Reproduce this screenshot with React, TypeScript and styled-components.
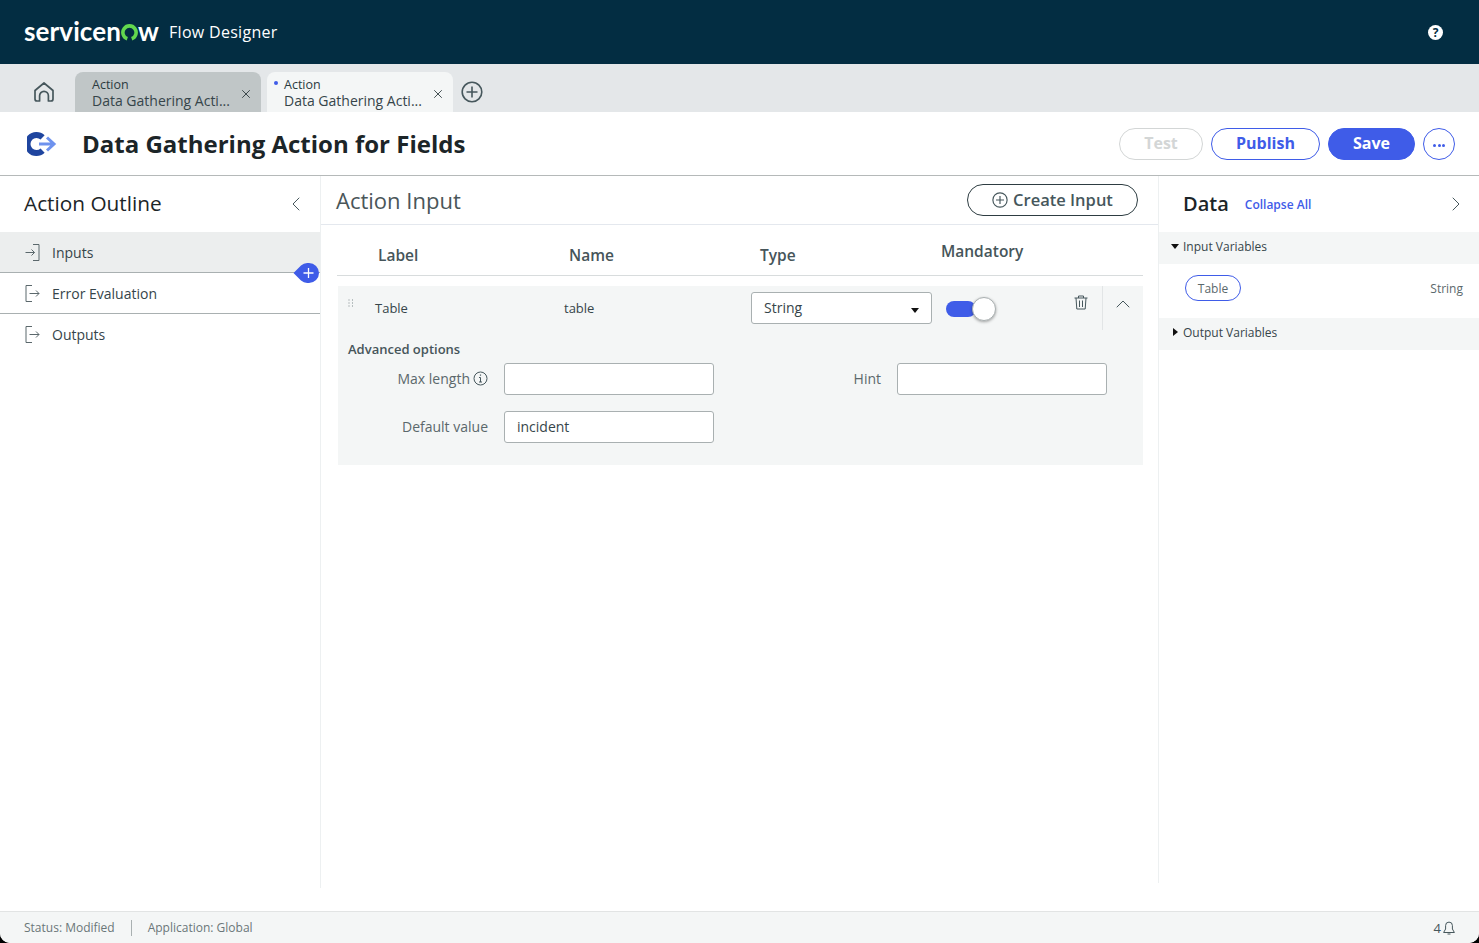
import styled, { createGlobalStyle } from 'styled-components';
import { ChevronLeft, ChevronRight, ChevronUp, X } from 'lucide-react';

const GlobalStyle = createGlobalStyle`
  html, body {
    margin: 0;
    height: 100%;
    background: #000;
  }
  #root {
    height: 100%;
  }
  * {
    box-sizing: border-box;
  }
`;

const Page = styled.div`
  height: 943px;
  display: flex;
  flex-direction: column;
  overflow: hidden;
  background: #fff;
  border-radius: 0 0 10px 10px;
  font-family: 'Open Sans', 'Liberation Sans', sans-serif;
  color: #2e3d42;
`;

const TopBar = styled.header`
  flex: 0 0 64px;
  display: flex;
  align-items: center;
  padding: 0 36px 0 24px;
  background: #032d42;
  color: #fff;
`;

const Logo = styled.div`
  display: flex;
  align-items: center;
  padding-bottom: 2px;
  font-family: 'Lato', sans-serif;
  font-weight: 700;
  font-size: 26px;
  line-height: 1;
  letter-spacing: 0.1px;
  width: 135px;
  white-space: nowrap;
`;

const ProductName = styled.span`
  margin-left: 10px;
  font-size: 16px;
  font-weight: 500;
  letter-spacing: 0.3px;
`;

const HelpBadge = styled.span`
  margin-left: auto;
  width: 15px;
  height: 15px;
  border-radius: 50%;
  background: #fff;
  color: #032d42;
  font-size: 12px;
  font-weight: 700;
  line-height: 15px;
  text-align: center;
`;

const TabStrip = styled.nav`
  flex: 0 0 48px;
  display: flex;
  align-items: flex-end;
  background: #e4e7e9;
`;

const HomeButton = styled.div`
  width: 75px;
  height: 40px;
  display: flex;
  align-items: center;
  justify-content: center;
  padding-left: 13px;
  color: #46575c;
`;

const Tab = styled.div<{ $active?: boolean }>`
  position: relative;
  width: 186px;
  height: 40px;
  margin-right: 6px;
  padding: 6px 0 0 17px;
  border-radius: 8px 8px 0 0;
  background: ${(p) => (p.$active ? '#f4f6f6' : '#c0c6c7')};
  font-size: 14px;
  line-height: 15px;
  color: #36454a;
`;

const TabKind = styled.div`
  font-size: 12.5px;
  line-height: 14px;
  color: #2b3a3f;
`;

const TabName = styled.div`
  margin-top: 1px;
`;

const TabDot = styled.span`
  position: absolute;
  left: 7px;
  top: 9px;
  width: 4px;
  height: 4px;
  border-radius: 50%;
  background: #3f5ce8;
`;

const TabClose = styled.span`
  position: absolute;
  right: 8px;
  top: 15px;
  display: flex;
  color: #1f2c30;
`;

const AddTab = styled.div`
  height: 40px;
  display: flex;
  align-items: center;
  padding: 0 0 0 2px;
  color: #46575c;
`;

const TitleBar = styled.div`
  flex: 0 0 64px;
  display: flex;
  align-items: center;
  padding: 1px 24px 0 27px;
  border-bottom: 1px solid #b5b9b9;
`;

const Title = styled.h1`
  margin: 0 0 2px 25px;
  font-size: 24px;
  font-weight: 700;
  color: #1c2528;
`;

const Actions = styled.div`
  margin-left: auto;
  display: flex;
  gap: 8px;
`;

const PillButton = styled.button<{ $kind: 'disabled' | 'outline' | 'solid'; $width: number }>`
  width: ${(p) => p.$width}px;
  height: 32px;
  padding: 0 0 2px;
  border-radius: 16px;
  font-family: inherit;
  font-size: 16px;
  font-weight: 700;
  border: 1px solid ${(p) => (p.$kind === 'disabled' ? '#d3d6d6' : '#3f5ce8')};
  background: ${(p) => (p.$kind === 'solid' ? '#3f5ce8' : '#fff')};
  color: ${(p) => (p.$kind === 'solid' ? '#fff' : p.$kind === 'outline' ? '#3f5ce8' : '#d3d6d6')};
`;

const MoreButton = styled.button`
  width: 32px;
  height: 32px;
  padding: 2px 0 0;
  display: flex;
  align-items: center;
  justify-content: center;
  gap: 1.5px;
  border: 1px solid #3f5ce8;
  border-radius: 50%;
  background: #fff;
`;

const MoreDot = styled.i`
  width: 3px;
  height: 3px;
  border-radius: 50%;
  background: #3f5ce8;
`;

const Body = styled.div`
  flex: 1;
  min-height: 0;
  display: flex;
`;

const LeftPanel = styled.aside`
  flex: 0 0 321px;
  height: 712px;
  border-right: 1px solid #edf0f1;
`;

const PanelHeader = styled.div`
  height: 56px;
  display: flex;
  align-items: center;
  justify-content: space-between;
  padding: 0 12px 2px 24px;
`;

const PanelTitle = styled.h2`
  margin: 0;
  font-size: 20.8px;
  font-weight: 500;
  color: #1c2528;
`;

const HeaderChevron = styled.span`
  display: flex;
  margin-top: 2px;
  color: #46575c;
`;

const OutlineRow = styled.div<{ $selected?: boolean }>`
  position: relative;
  height: 41px;
  display: flex;
  align-items: center;
  gap: 12px;
  padding: 1px 0 0 25px;
  font-size: 14px;
  color: #36454a;
  background: ${(p) => (p.$selected ? '#eceeee' : '#fff')};
  border-bottom: 1px solid #a9b0b1;

  &:last-child {
    padding-top: 0;
    border-bottom: none;
  }
`;

const AddStep = styled.div`
  position: absolute;
  right: 1px;
  bottom: -11px;
  display: flex;
  z-index: 1;
`;

const Center = styled.main`
  flex: 1;
  min-width: 0;
  height: 712px;
`;

const CenterHeader = styled.div`
  height: 49px;
  display: flex;
  align-items: center;
  justify-content: space-between;
  padding: 0 20px 1px 15px;
  border-bottom: 1px solid #e4e8ee;
`;

const CenterTitle = styled.h2`
  margin: 0;
  font-size: 22px;
  font-weight: 400;
  color: #4a5659;
`;

const CreateButton = styled.button`
  width: 171px;
  height: 32px;
  display: flex;
  align-items: center;
  justify-content: center;
  gap: 5px;
  padding: 0;
  border: 1px solid #2e3d42;
  border-radius: 16px;
  background: #fff;
  font-family: inherit;
  font-size: 16.5px;
  font-weight: 600;
  color: #46575c;
`;

const TableHead = styled.div`
  height: 51px;
  margin: 0 15px 0 16px;
  display: grid;
  grid-template-columns: 191px 191px 181px 1fr;
  align-items: center;
  padding: 10px 0 0 41px;
  border-bottom: 1px solid #d8dcdd;
  font-size: 15.5px;
  font-weight: 600;
  color: #46555a;
`;

const HeadCell = styled.div<{ $raised?: boolean }>`
  margin-bottom: ${(p) => (p.$raised ? '8px' : '0')};
`;

const InputCard = styled.section`
  height: 179px;
  margin: 10px 15px 0 17px;
  background: #f4f6f6;
`;

const CardTop = styled.div`
  height: 44px;
  display: grid;
  grid-template-columns: 37px 189px 187px 195px 100px 56px 41px;
  align-items: center;
  font-size: 13px;
  color: #36454a;
`;

const DragHandle = styled.div`
  align-self: start;
  padding: 13px 0 0 10px;
  display: flex;
  color: #7b878a;
`;

const SelectBox = styled.div`
  width: 181px;
  height: 32px;
  display: flex;
  align-items: center;
  justify-content: space-between;
  padding: 0 12px 2px;
  background: #fff;
  border: 1px solid #a9b0b1;
  border-radius: 3px;
  font-size: 14px;
`;

const Caret = styled.span`
  width: 0;
  height: 0;
  margin-top: 6px;
  border-left: 4px solid transparent;
  border-right: 4px solid transparent;
  border-top: 5px solid #111;
`;

const Toggle = styled.div`
  position: relative;
  width: 30px;
  height: 16px;
  margin-top: 2px;
  border-radius: 8px;
  background: #3f5ce8;
`;

const ToggleKnob = styled.span`
  position: absolute;
  left: 26px;
  top: -4px;
  width: 24px;
  height: 24px;
  border-radius: 50%;
  background: #fff;
  border: 1px solid #a9b0b1;
  box-shadow: 0 1px 3px rgba(0, 0, 0, 0.35);
`;

const TrashCell = styled.div`
  justify-self: end;
  align-self: start;
  padding: 9px 14px 0 0;
  display: flex;
  color: #46575c;
`;

const CollapseCell = styled.div`
  height: 44px;
  display: flex;
  justify-content: center;
  padding-top: 6px;
  border-left: 1px solid #e2e5e6;
  color: #46575c;
`;

const AdvancedTitle = styled.div`
  margin: 10px 0 5px 10px;
  font-size: 13px;
  line-height: 18px;
  font-weight: 600;
  color: #46555a;
`;

const FieldGrid = styled.div`
  display: grid;
  grid-template-columns: 140px 210px 151px 210px;
  column-gap: 16px;
  row-gap: 16px;
  padding-left: 10px;
  align-items: center;
`;

const FieldLabel = styled.label`
  display: flex;
  align-items: center;
  justify-content: flex-end;
  gap: 3px;
  padding-bottom: 2px;
  font-size: 14px;
  color: #5b686c;
`;

const FieldBox = styled.div`
  height: 32px;
  padding: 0 12px 2px;
  display: flex;
  align-items: center;
  background: #fff;
  border: 1px solid #a9b0b1;
  border-radius: 3px;
  font-size: 14px;
  color: #36454a;
`;

const RightPanel = styled.aside`
  flex: 0 0 321px;
  height: 707px;
  border-left: 1px solid #edf0f1;
`;

const DataHeader = styled.div`
  height: 56px;
  display: flex;
  align-items: center;
  padding: 0 11px 2px 24px;
`;

const DataTitle = styled.h2`
  margin: 0;
  font-size: 20px;
  font-weight: 600;
  color: #1c2528;
`;

const CollapseLink = styled.a`
  margin: 2px auto 0 16px;
  font-size: 12px;
  font-weight: 600;
  color: #3f5ce8;
`;

const SectionBar = styled.div`
  height: 32px;
  display: flex;
  align-items: center;
  padding-bottom: 4px;
  background: #f4f6f6;
  font-size: 12px;
  color: #36454a;
`;

const SectionCaret = styled.span`
  width: 24px;
  display: flex;
  justify-content: flex-end;
  padding-right: 4px;
`;

const CaretDown = styled.i`
  width: 0;
  height: 0;
  border-left: 4.5px solid transparent;
  border-right: 4.5px solid transparent;
  border-top: 5px solid #111;
`;

const CaretRight = styled.i`
  width: 0;
  height: 0;
  margin-right: 1px;
  border-top: 4.5px solid transparent;
  border-bottom: 4.5px solid transparent;
  border-left: 5px solid #111;
`;

const VariableRow = styled.div`
  height: 54px;
  display: flex;
  align-items: center;
  justify-content: space-between;
  padding: 0 16px 6px 26px;
  font-size: 12px;
  color: #5b686c;
`;

const VariablePill = styled.span`
  width: 56px;
  height: 26px;
  display: flex;
  align-items: center;
  justify-content: center;
  border: 1px solid #3f5ce8;
  border-radius: 13px;
`;

const Footer = styled.footer`
  flex: 0 0 32px;
  display: flex;
  align-items: center;
  padding: 0 24px;
  background: #f4f6f6;
  border-top: 1px solid #e2e4e4;
  font-size: 12px;
  color: #6b7679;
`;

const FooterDivider = styled.span`
  width: 1px;
  height: 16px;
  margin: 0 16px;
  background: #a9b0b1;
`;

const Notifications = styled.div`
  margin-left: auto;
  display: flex;
  align-items: center;
  gap: 2px;
  font-size: 13px;
  color: #46575c;
`;

function GreenO() {
  return (
    <svg width="17" height="17" viewBox="0 0 17 17" fill="none" aria-hidden style={{ margin: '3px 0 0 0' }}>
      <path d="M6.3 14.72 A6.6 6.6 0 1 1 10.7 14.72" stroke="#62d84e" strokeWidth="3.6" />
    </svg>
  );
}

function HomeIcon() {
  return (
    <svg width="22" height="22" viewBox="0 0 22 22" fill="none" stroke="currentColor" strokeWidth="1.7" strokeLinejoin="round" aria-hidden>
      <path d="M2 9.5 11 2l9 7.5V18a2 2 0 0 1-2 2h-2.6v-5.2a4.4 4.4 0 0 0-8.8 0V20H4a2 2 0 0 1-2-2z" />
    </svg>
  );
}

function CirclePlus({ size, strokeWidth }: { size: number; strokeWidth: number }) {
  return (
    <svg width={size} height={size} viewBox="0 0 22 22" fill="none" stroke="currentColor" strokeWidth={strokeWidth} aria-hidden>
      <circle cx="11" cy="11" r="9.8" />
      <path d="M11 5.5v11M5.5 11h11" />
    </svg>
  );
}

function ActionMark() {
  return (
    <svg width="30" height="26" viewBox="0 0 30 26" fill="none" aria-hidden>
      <path d="M15.6 6.4 A9 9 0 1 0 15.6 19.6" stroke="#1f459f" strokeWidth="6" />
      <path d="M12 13h15M20 6.5 27 13l-7 6.5" stroke="#6e92ee" strokeWidth="3" />
    </svg>
  );
}

function AddDrop() {
  return (
    <svg width="26" height="20" viewBox="0 0 26 20" aria-hidden>
      <path d="M0.5 10 L8 2.5 A10 10 0 0 1 15 0 H16 A10 10 0 0 1 16 20 H15 A10 10 0 0 1 8 17.5 Z" fill="#3f5ce8" />
      <path d="M15.5 5v10M10.5 10h10" stroke="#fff" strokeWidth="1.3" />
    </svg>
  );
}

function InIcon() {
  return (
    <svg width="15" height="17" viewBox="0 0 15 17" fill="none" stroke="#5b686c" strokeWidth="1" aria-hidden>
      <path d="M8 .5h6v16H8M.5 8.5h9M6.5 5.5l3 3-3 3" />
    </svg>
  );
}

function OutIcon() {
  return (
    <svg width="15" height="17" viewBox="0 0 15 17" fill="none" stroke="#5b686c" strokeWidth="1" aria-hidden>
      <path d="M7 .5H1v16h6M4.5 8.5h9.5M11 5.5l3 3-3 3" />
    </svg>
  );
}

function DragDots() {
  return (
    <svg width="6" height="8" viewBox="0 0 6 8" fill="currentColor" aria-hidden>
      {[0.5, 3.5, 6.5].map((y) => (
        <g key={y}>
          <rect x="0.5" y={y} width="1" height="1" />
          <rect x="4" y={y} width="1" height="1" />
        </g>
      ))}
    </svg>
  );
}

function TrashIcon() {
  return (
    <svg width="14" height="15" viewBox="0 0 14 15" fill="none" stroke="currentColor" strokeWidth="1" aria-hidden>
      <path d="M.5 3h13M4.5 3V1h5v2M2 3l.8 11h8.4L12 3M5.5 5.5v6.5M8.5 5.5v6.5" />
    </svg>
  );
}

function InfoIcon() {
  return (
    <svg width="15" height="15" viewBox="0 0 15 15" fill="none" stroke="#46575c" strokeWidth="1" aria-hidden>
      <circle cx="7.5" cy="7.5" r="6.5" />
      <path d="M7.5 6.5v4.5M6 6.5h1.5M6 11h3" />
      <path d="M7.5 3.5v1.2" strokeWidth="1.2" />
    </svg>
  );
}

function BellIcon() {
  return (
    <svg width="12" height="14" viewBox="0 0 12 14" fill="none" stroke="#46575c" strokeWidth="1" aria-hidden>
      <path d="M.6 11.5 2.600 8V4.500a3.400 3.400 0 0 1 6.800 0V8l2 3.500zM4.500 13h3" />
    </svg>
  );
}

export default function App() {
  return (
    <>
      <GlobalStyle />
      <Page>
        <TopBar>
          <Logo>
            servicen
            <GreenO />
            w
          </Logo>
          <ProductName>Flow Designer</ProductName>
          <HelpBadge>?</HelpBadge>
        </TopBar>

        <TabStrip>
          <HomeButton>
            <HomeIcon />
          </HomeButton>
          <Tab>
            <TabKind>Action</TabKind>
            <TabName>Data Gathering Acti...</TabName>
            <TabClose>
              <X size={14} strokeWidth={1.4} />
            </TabClose>
          </Tab>
          <Tab $active>
            <TabDot />
            <TabKind>Action</TabKind>
            <TabName>Data Gathering Acti...</TabName>
            <TabClose>
              <X size={14} strokeWidth={1.4} />
            </TabClose>
          </Tab>
          <AddTab>
            <CirclePlus size={22} strokeWidth={1.6} />
          </AddTab>
        </TabStrip>

        <TitleBar>
          <ActionMark />
          <Title>Data Gathering Action for Fields</Title>
          <Actions>
            <PillButton $kind="disabled" $width={84}>Test</PillButton>
            <PillButton $kind="outline" $width={109}>Publish</PillButton>
            <PillButton $kind="solid" $width={87}>Save</PillButton>
            <MoreButton aria-label="More">
              <MoreDot />
              <MoreDot />
              <MoreDot />
            </MoreButton>
          </Actions>
        </TitleBar>

        <Body>
          <LeftPanel>
            <PanelHeader>
              <PanelTitle>Action Outline</PanelTitle>
              <HeaderChevron>
                <ChevronLeft size={24} strokeWidth={1} />
              </HeaderChevron>
            </PanelHeader>
            <OutlineRow $selected>
              <InIcon />
              Inputs
              <AddStep>
                <AddDrop />
              </AddStep>
            </OutlineRow>
            <OutlineRow>
              <OutIcon />
              Error Evaluation
            </OutlineRow>
            <OutlineRow>
              <OutIcon />
              Outputs
            </OutlineRow>
          </LeftPanel>

          <Center>
            <CenterHeader>
              <CenterTitle>Action Input</CenterTitle>
              <CreateButton>
                <CirclePlus size={16} strokeWidth={1.6} />
                Create Input
              </CreateButton>
            </CenterHeader>

            <TableHead>
              <HeadCell>Label</HeadCell>
              <HeadCell>Name</HeadCell>
              <HeadCell>Type</HeadCell>
              <HeadCell $raised>Mandatory</HeadCell>
            </TableHead>

            <InputCard>
              <CardTop>
                <DragHandle>
                  <DragDots />
                </DragHandle>
                <div>Table</div>
                <div>table</div>
                <SelectBox>
                  String
                  <Caret />
                </SelectBox>
                <Toggle>
                  <ToggleKnob />
                </Toggle>
                <TrashCell>
                  <TrashIcon />
                </TrashCell>
                <CollapseCell>
                  <ChevronUp size={24} strokeWidth={1} />
                </CollapseCell>
              </CardTop>
              <AdvancedTitle>Advanced options</AdvancedTitle>
              <FieldGrid>
                <FieldLabel>
                  Max length
                  <InfoIcon />
                </FieldLabel>
                <FieldBox />
                <FieldLabel>Hint</FieldLabel>
                <FieldBox />
                <FieldLabel>Default value</FieldLabel>
                <FieldBox>incident</FieldBox>
              </FieldGrid>
            </InputCard>
          </Center>

          <RightPanel>
            <DataHeader>
              <DataTitle>Data</DataTitle>
              <CollapseLink>Collapse All</CollapseLink>
              <HeaderChevron>
                <ChevronRight size={24} strokeWidth={1} />
              </HeaderChevron>
            </DataHeader>
            <SectionBar>
              <SectionCaret>
                <CaretDown />
              </SectionCaret>
              Input Variables
            </SectionBar>
            <VariableRow>
              <VariablePill>Table</VariablePill>
              String
            </VariableRow>
            <SectionBar>
              <SectionCaret>
                <CaretRight />
              </SectionCaret>
              Output Variables
            </SectionBar>
          </RightPanel>
        </Body>

        <Footer>
          Status: Modified
          <FooterDivider />
          Application: Global
          <Notifications>
            4
            <BellIcon />
          </Notifications>
        </Footer>
      </Page>
    </>
  );
}
